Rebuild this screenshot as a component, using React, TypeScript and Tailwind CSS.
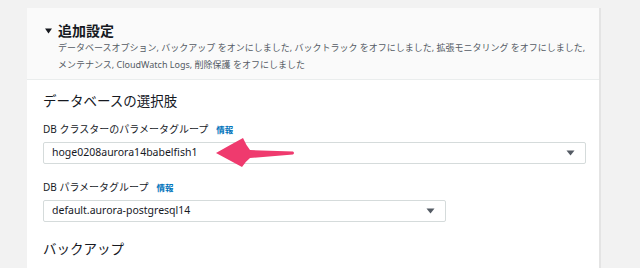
import React from 'react';

const Caret: React.FC = () => (
    <svg width="9" height="6" viewBox="0 0 9 6" className="shrink-0">
        <path d="M0.5 0.5 L8.5 0.5 L4.5 5.5 Z" fill="#545b64" />
    </svg>
);

const Info: React.FC = () => (
    <span className="ml-[8px] text-[8.5px] font-bold text-[#0073bb]">情報</span>
);

const SelectBox: React.FC<{ value: string; width: string }> = ({ value, width }) => (
    <div
        className={`${width} mt-[5px] h-[22px] flex items-center justify-between border border-[#d5dbdb] rounded-[2px] bg-white pl-[8px] pr-[10px]`}
    >
        <span className="text-[10.5px] text-[#16191f]">{value}</span>
        <Caret />
    </div>
);

const App: React.FC = () => {
    return (
        <div
            className="relative h-[268px] w-[640px] overflow-hidden bg-[#f2f2f2] pt-[8px] pl-[27px]"
            style={{ fontFamily: '"Noto Sans", "Noto Sans CJK JP", sans-serif' }}
        >
            <div className="w-[574px] h-[300px] bg-white border-r-2 border-[#e4e4e4]">
                {/* 追加設定 header */}
                <div className="bg-[#fafafa] border-b border-[#eaeded] pt-[14px] pb-[6px] pl-[18px]">
                    <div className="flex items-center text-[14px] leading-[17px] font-bold text-[#16191f]">
                        <svg width="7" height="6" viewBox="0 0 7 6" className="mr-[6px]">
                            <path d="M0 0.5 L7 0.5 L3.5 5.5 Z" fill="#16191f" />
                        </svg>
                        追加設定
                    </div>
                    <div className="pl-[13px] text-[9px] leading-[17px] text-[#545b64] whitespace-nowrap">
                        <div>データベースオプション, バックアップ をオンにしました, バックトラック をオフにしました, 拡張モニタリング をオフにしました,</div>
                        <div>メンテナンス, CloudWatch Logs, 削除保護 をオフにしました</div>
                    </div>
                </div>

                {/* body */}
                <div className="pl-[16px] pt-[11px]">
                    <div className="text-[13.5px] leading-[20px] text-[#16191f]">データベースの選択肢</div>

                    <div className="mt-[11px] text-[10px] leading-[14px] text-[#16191f]">
                        DB クラスターのパラメータグループ
                        <Info />
                    </div>
                    <SelectBox value="hoge0208aurora14babelfish1" width="w-[543px]" />

                    <div className="mt-[16px] text-[10px] leading-[14px] text-[#16191f]">
                        DB パラメータグループ
                        <Info />
                    </div>
                    <SelectBox value="default.aurora-postgresql14" width="w-[403px]" />

                    <div className="mt-[17px] text-[13.5px] leading-[20px] text-[#16191f]">バックアップ</div>
                </div>
            </div>

            {/* pink arrow annotation */}
            <svg
                width="82"
                height="34"
                viewBox="0 0 82 34"
                className="absolute left-[214px] top-[136px]"
            >
                <path
                    d="M2 17 Q16 9 29 2 Q32 9 36 14 L79 15.5 Q81 17 79 18.5 L36 22 Q31 26 28 31 Q15 24 2 17 Z"
                    fill="#ef3a6e"
                />
            </svg>
        </div>
    );
};

export default App;
